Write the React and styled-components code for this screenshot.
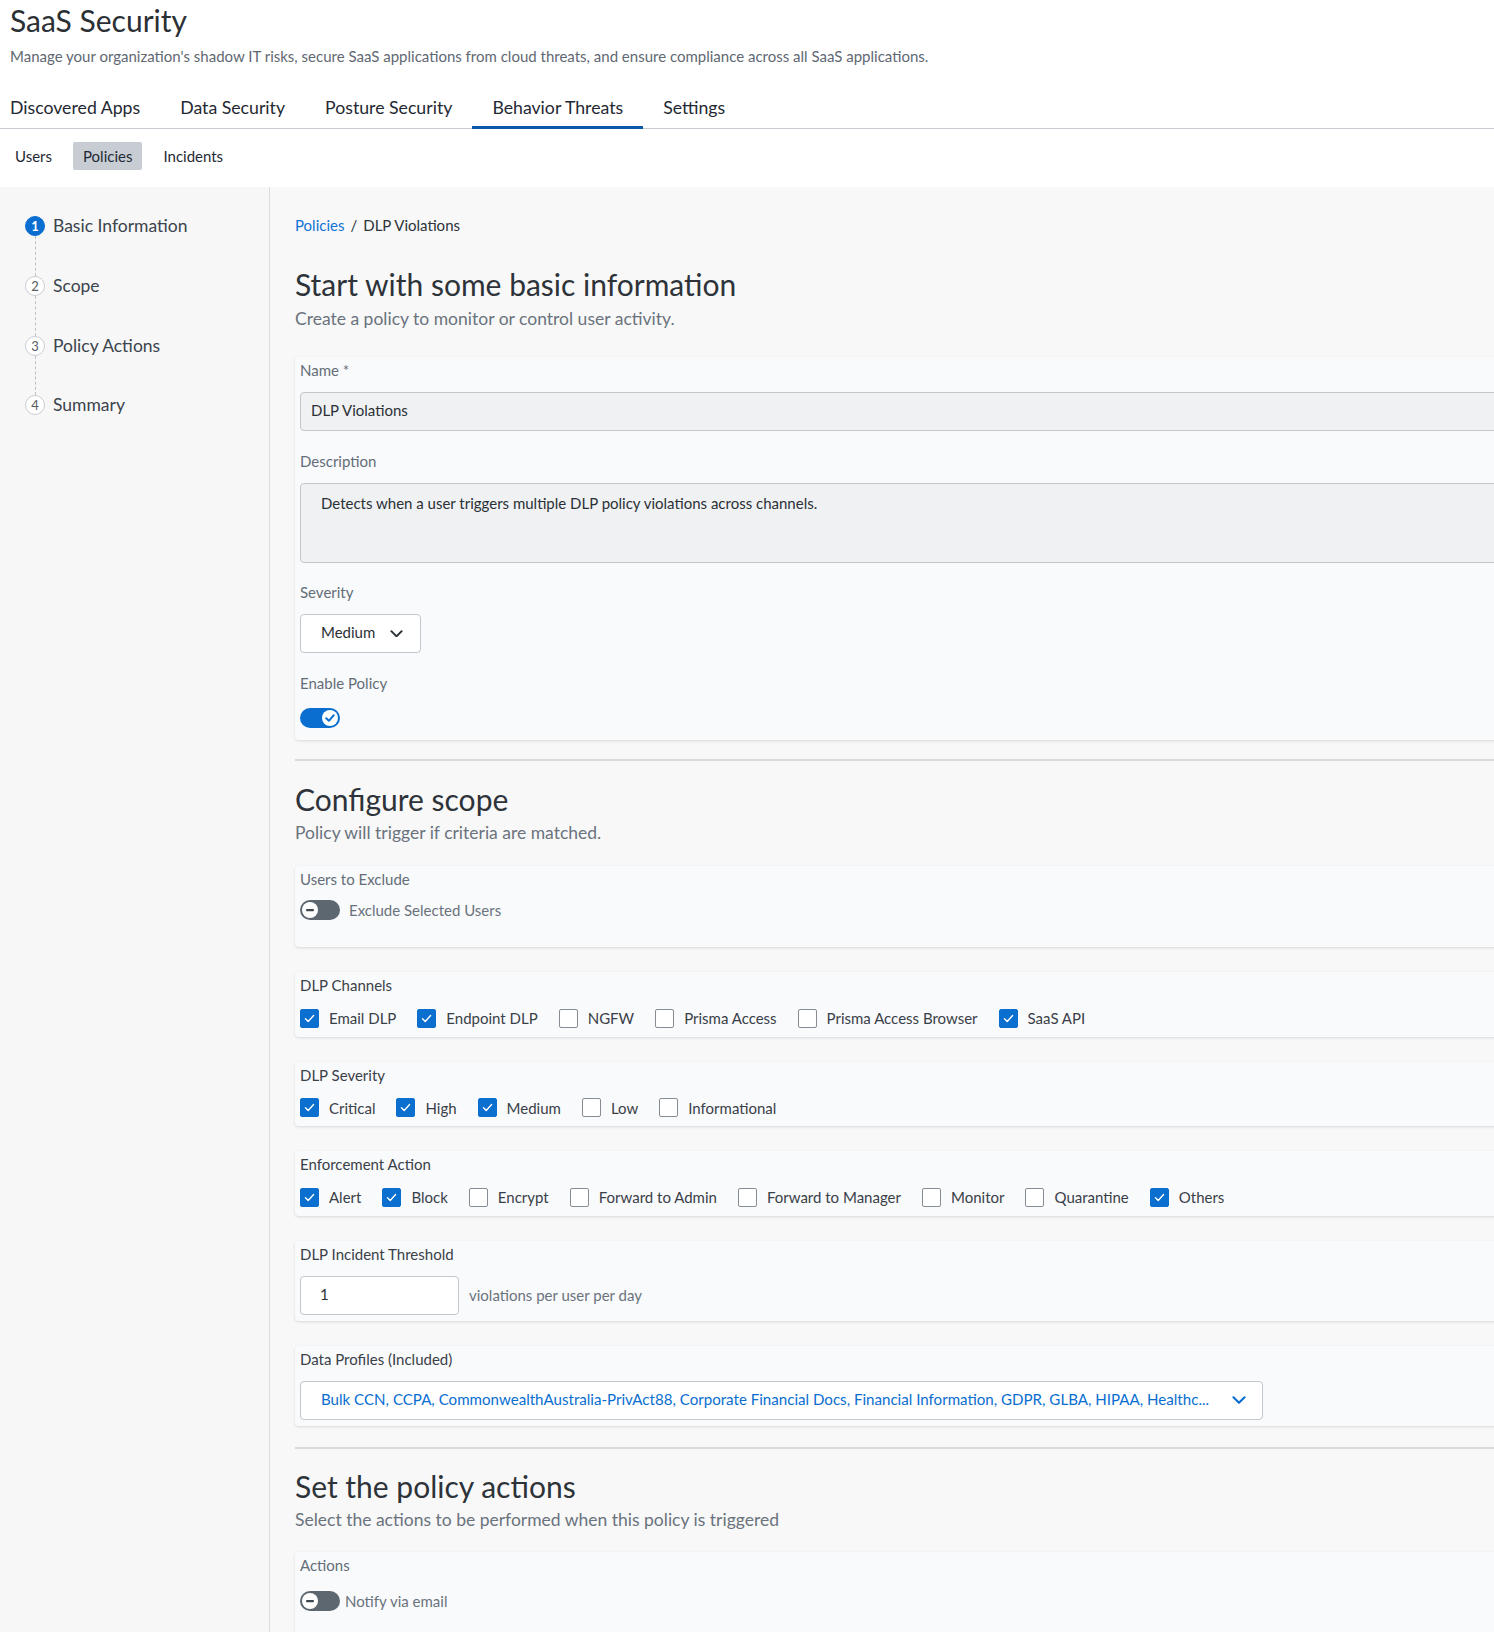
import React from "react";
import styled, { createGlobalStyle } from "styled-components";

const Global = createGlobalStyle`
  html, body { margin: 0; padding: 0; }
  body {
    font-family: Lato, "Noto Sans", sans-serif;
    background: #ffffff;
    color: #2d3339;
    overflow-x: hidden;
  }
  * { box-sizing: border-box; }
`;

const Page = styled.div`
  width: 1494px;
  min-height: 1632px;
  display: flex;
  flex-direction: column;
  overflow: hidden;
`;

const Header = styled.header`
  padding: 3px 10px 0 10px;
`;

const Title = styled.h1`
  margin: 0;
  font-size: 30px;
  line-height: 34px;
  font-weight: 400;
  color: #2b3035;
`;

const Subtitle = styled.p`
  margin: 9px 0 0 0;
  font-size: 15px;
  line-height: 20px;
  color: #5f6872;
`;

const TabBar = styled.nav`
  margin-top: 27px;
  display: flex;
  border-bottom: 1px solid #c8cdd3;
`;

const Tab = styled.div`
  padding: 3px 20px 6px 20px;
  margin-bottom: -1px;
  font-size: 17.7px;
  line-height: 24px;
  color: #1f2933;
  border-bottom: 3px solid ${(p) => (p.$active ? "#0b58a6" : "transparent")};
  &:first-child { padding-left: 10px; }
`;

const SubTabs = styled.div`
  display: flex;
  gap: 11px;
  padding: 13px 0 17px 5px;
`;

const SubTab = styled.div`
  height: 28px;
  line-height: 28px;
  padding: 0 10px;
  font-size: 15px;
  color: #1f2933;
  border-radius: 2px;
  background: ${(p) => (p.$active ? "#c7cdd3" : "transparent")};
`;

const Body = styled.div`
  flex: 1;
  display: flex;
  background: #f8f8f8;
`;

const Sidebar = styled.aside`
  width: 270px;
  flex-shrink: 0;
  border-right: 1px solid #d9dcdf;
  background: #f7f7f7;
  padding: 29px 0 0 25px;
`;

const Steps = styled.ol`
  list-style: none;
  margin: 0;
  padding: 0;
  display: flex;
  flex-direction: column;
  gap: 39.8px;
`;

const Step = styled.li`
  position: relative;
  display: flex;
  align-items: center;
  gap: 8px;
  height: 20px;
  &:not(:last-child)::after {
    content: "";
    position: absolute;
    left: 9.5px;
    top: 20px;
    height: 39.8px;
    border-left: 1px dashed #bcc1c6;
  }
`;

const StepCircle = styled.span`
  width: 20px;
  height: 20px;
  border-radius: 50%;
  display: flex;
  align-items: center;
  justify-content: center;
  font-size: 13px;
  font-weight: ${(p) => (p.$active ? 700 : 400)};
  color: ${(p) => (p.$active ? "#ffffff" : "#555c63")};
  background: ${(p) => (p.$active ? "#0a6ed1" : "#ffffff")};
  border: 1px solid ${(p) => (p.$active ? "#0a6ed1" : "#c8cdd2")};
`;

const StepLabel = styled.span`
  font-size: 17.5px;
  line-height: 24px;
  color: #3b434c;
`;

const Main = styled.main`
  flex: 1;
  min-width: 0;
  padding: 28px 0 0 25px;
  overflow: hidden;
`;

const Column = styled.div`
  width: calc(100% + 40px);
`;

const Breadcrumb = styled.div`
  font-size: 15px;
  line-height: 20px;
  color: #2d3339;
  display: flex;
  gap: 6px;
`;

const Crumb = styled.span`
  color: ${(p) => (p.$link ? "#1173d4" : "#2d3339")};
`;

const SectionTitle = styled.h2`
  margin: ${(p) => p.$top}px 0 0 0;
  font-size: 30px;
  line-height: 36px;
  font-weight: 400;
  color: #2d3339;
`;

const SectionSub = styled.p`
  margin: ${(p) => p.$mt ?? 5}px 0 ${(p) => p.$bottom}px 0;
  font-size: 17.5px;
  line-height: 24px;
  color: #6a737d;
`;

const Divider = styled.hr`
  margin: ${(p) => p.$top}px 0 0 0;
  border: none;
  height: 2px;
  background: #d8dbdf;
`;

const Card = styled.section`
  background: #f9fafc;
  border-radius: 4px;
  box-shadow: 0 1px 3px rgba(0, 0, 0, 0.13);
  padding: 3px 5px ${(p) => p.$pb ?? 6}px 5px;
  margin-bottom: ${(p) => p.$mb ?? 25}px;
`;

const Field = styled.div`
  & + & { margin-top: 19.5px; }
`;

const Label = styled.div`
  font-size: 15px;
  line-height: 20px;
  margin-bottom: ${(p) => p.$mb ?? 12}px;
  color: ${(p) => (p.$dark ? "#394048" : "#646d77")};
`;

const TextInput = styled.div`
  height: 39px;
  display: flex;
  align-items: center;
  padding: 0 0 3px 10px;
  font-size: 15px;
  color: #2b3035;
  background: #eff1f3;
  border: 1px solid #c3c8ce;
  border-radius: 4px;
`;

const TextArea = styled.div`
  height: 80px;
  padding: 9px 20px;
  font-size: 15px;
  line-height: 20px;
  color: #2b3035;
  background: #eff1f3;
  border: 1px solid #c3c8ce;
  border-radius: 4px;
`;

const SelectBox = styled.div`
  width: ${(p) => p.$w}px;
  height: 39px;
  display: flex;
  align-items: center;
  justify-content: space-between;
  padding: 0 ${(p) => p.$pr}px 0 20px;
  background: #ffffff;
  border: 1px solid #c3c8ce;
  border-radius: 4px;
  font-size: ${(p) => p.$fs ?? 15}px;
  color: ${(p) => (p.$blue ? "#0a6ed1" : "#2b3035")};
`;

const SelectText = styled.span`
  white-space: nowrap;
  overflow: hidden;
  padding-bottom: 3px;
`;

const ToggleRow = styled.div`
  display: flex;
  align-items: center;
  gap: ${(p) => p.$gap}px;
  height: 20px;
  margin-top: ${(p) => p.$mt}px;
  margin-bottom: ${(p) => p.$mb ?? 0}px;
`;

const Track = styled.span`
  position: relative;
  width: 40px;
  height: 20px;
  border-radius: 10px;
  flex-shrink: 0;
  background: ${(p) => (p.$on ? "#0a6ed1" : "#5d6770")};
`;

const Knob = styled.span`
  position: absolute;
  top: 2px;
  ${(p) => (p.$on ? "right: 2px;" : "left: 2px;")}
  width: 16px;
  height: 16px;
  border-radius: 50%;
  background: #ffffff;
  display: flex;
  align-items: center;
  justify-content: center;
`;

const ToggleText = styled.span`
  font-size: 15px;
  color: #6a737d;
`;

const CheckRow = styled.div`
  display: flex;
  align-items: center;
  height: 24px;
  gap: 21px;
`;

const CheckItem = styled.label`
  display: flex;
  align-items: center;
  gap: 10px;
  font-size: 15px;
  color: #394048;
`;

const Box = styled.span`
  width: 19px;
  height: 19px;
  border-radius: 2px;
  display: flex;
  align-items: center;
  justify-content: center;
  background: ${(p) => (p.$checked ? "#0b6fcf" : "#ffffff")};
  border: 1px solid ${(p) => (p.$checked ? "#0b6fcf" : "#858c94")};
`;

const ThresholdRow = styled.div`
  display: flex;
  align-items: center;
  gap: 10px;
`;

const NumberInput = styled.div`
  width: 159px;
  height: 39px;
  display: flex;
  align-items: center;
  padding: 0 0 3px 19px;
  background: #ffffff;
  border: 1px solid #c3c8ce;
  border-radius: 4px;
  font-size: 15px;
  color: #2b3035;
`;

const Hint = styled.span`
  font-size: 15px;
  color: #6a737d;
`;

const Chevron = ({ color = "#2b3035", size = 13 }) => (
  <svg width={size} height={size * 0.6} viewBox="0 0 13 8" fill="none">
    <path d="M1.2 1.2L6.5 6.5L11.8 1.2" stroke={color} strokeWidth="2" strokeLinecap="round" strokeLinejoin="round" />
  </svg>
);

const Toggle = ({ on, text, mt, mb, gap = 5 }) => (
  <ToggleRow $mt={mt} $mb={mb} $gap={gap}>
    <Track $on={on}>
      <Knob $on={on}>
        {on ? (
          <svg width="12" height="12" viewBox="0 0 12 12" fill="none">
            <path d="M2.2 6.2L4.9 8.8L9.8 3.2" stroke="#0a6ed1" strokeWidth="2" strokeLinecap="round" strokeLinejoin="round" />
          </svg>
        ) : (
          <svg width="10" height="10" viewBox="0 0 10 10">
            <rect x="1" y="4" width="8" height="2.2" rx="1" fill="#3d454d" />
          </svg>
        )}
      </Knob>
    </Track>
    {text && <ToggleText>{text}</ToggleText>}
  </ToggleRow>
);

const Check = ({ checked, label }) => (
  <CheckItem>
    <Box $checked={checked}>
      {checked && (
        <svg width="13" height="13" viewBox="0 0 13 13" fill="none">
          <path d="M2.5 6.8L5.2 9.4L10.6 3.6" stroke="#ffffff" strokeWidth="1.4" strokeLinecap="round" strokeLinejoin="round" />
        </svg>
      )}
    </Box>
    {label}
  </CheckItem>
);

const CheckGroup = ({ title, items }) => (
  <Card $pb={6.5}>
    <Label $dark $mb={11}>{title}</Label>
    <CheckRow>
      {items.map(([label, checked]) => (
        <Check key={label} label={label} checked={checked} />
      ))}
    </CheckRow>
  </Card>
);

const tabs = ["Discovered Apps", "Data Security", "Posture Security", "Behavior Threats", "Settings"];
const steps = ["Basic Information", "Scope", "Policy Actions", "Summary"];

export default function App() {
  return (
    <>
      <Global />
      <Page>
        <Header>
          <Title>SaaS Security</Title>
          <Subtitle>
            Manage your organization's shadow IT risks, secure SaaS applications from cloud threats, and ensure compliance across all SaaS applications.
          </Subtitle>
        </Header>
        <TabBar>
          {tabs.map((t) => (
            <Tab key={t} $active={t === "Behavior Threats"}>{t}</Tab>
          ))}
        </TabBar>
        <SubTabs>
          <SubTab>Users</SubTab>
          <SubTab $active>Policies</SubTab>
          <SubTab>Incidents</SubTab>
        </SubTabs>
        <Body>
          <Sidebar>
            <Steps>
              {steps.map((s, i) => (
                <Step key={s}>
                  <StepCircle $active={i === 0}>{i + 1}</StepCircle>
                  <StepLabel>{s}</StepLabel>
                </Step>
              ))}
            </Steps>
          </Sidebar>
          <Main>
            <Column>
              <Breadcrumb>
                <Crumb $link>Policies</Crumb>
                <Crumb>/</Crumb>
                <Crumb>DLP Violations</Crumb>
              </Breadcrumb>

              <SectionTitle $top={31}>Start with some basic information</SectionTitle>
              <SectionSub $bottom={26}>Create a policy to monitor or control user activity.</SectionSub>

              <Card $pb={12} $mb={0}>
                <Field>
                  <Label>Name *</Label>
                  <TextInput>DLP Violations</TextInput>
                </Field>
                <Field>
                  <Label>Description</Label>
                  <TextArea>Detects when a user triggers multiple DLP policy violations across channels.</TextArea>
                </Field>
                <Field>
                  <Label>Severity</Label>
                  <SelectBox $w={121} $pr={17}>
                    <SelectText>Medium</SelectText>
                    <Chevron />
                  </SelectBox>
                </Field>
                <Field>
                  <Label>Enable Policy</Label>
                  <Toggle on mt={15} />
                </Field>
              </Card>

              <Divider $top={19} />
              <SectionTitle $top={20}>Configure scope</SectionTitle>
              <SectionSub $mt={4} $bottom={21.5}>Policy will trigger if criteria are matched.</SectionSub>

              <Card $pb={6}>
                <Label>Users to Exclude</Label>
                <Toggle text="Exclude Selected Users" mt={-1} mb={21} gap={9} />
              </Card>

              <CheckGroup
                title="DLP Channels"
                items={[
                  ["Email DLP", true],
                  ["Endpoint DLP", true],
                  ["NGFW", false],
                  ["Prisma Access", false],
                  ["Prisma Access Browser", false],
                  ["SaaS API", true],
                ]}
              />
              <CheckGroup
                title="DLP Severity"
                items={[
                  ["Critical", true],
                  ["High", true],
                  ["Medium", true],
                  ["Low", false],
                  ["Informational", false],
                ]}
              />
              <CheckGroup
                title="Enforcement Action"
                items={[
                  ["Alert", true],
                  ["Block", true],
                  ["Encrypt", false],
                  ["Forward to Admin", false],
                  ["Forward to Manager", false],
                  ["Monitor", false],
                  ["Quarantine", false],
                  ["Others", true],
                ]}
              />

              <Card>
                <Label $dark>DLP Incident Threshold</Label>
                <ThresholdRow>
                  <NumberInput>1</NumberInput>
                  <Hint>violations per user per day</Hint>
                </ThresholdRow>
              </Card>

              <Card $mb={0}>
                <Label $dark>Data Profiles (Included)</Label>
                <SelectBox $w={963} $pr={16} $fs={15.1} $blue>
                  <SelectText>
                    Bulk CCN, CCPA, CommonwealthAustralia-PrivAct88, Corporate Financial Docs, Financial Information, GDPR, GLBA, HIPAA, Healthc...
                  </SelectText>
                  <Chevron color="#0a6ed1" size={14} />
                </SelectBox>
              </Card>

              <Divider $top={21} />
              <SectionTitle $top={19}>Set the policy actions</SectionTitle>
              <SectionSub $mt={4} $bottom={20}>Select the actions to be performed when this policy is triggered</SectionSub>

              <Card $pb={40} $mb={0}>
                <Label>Actions</Label>
                <Toggle text="Notify via email" mt={16} />
              </Card>
            </Column>
          </Main>
        </Body>
      </Page>
    </>
  );
}
